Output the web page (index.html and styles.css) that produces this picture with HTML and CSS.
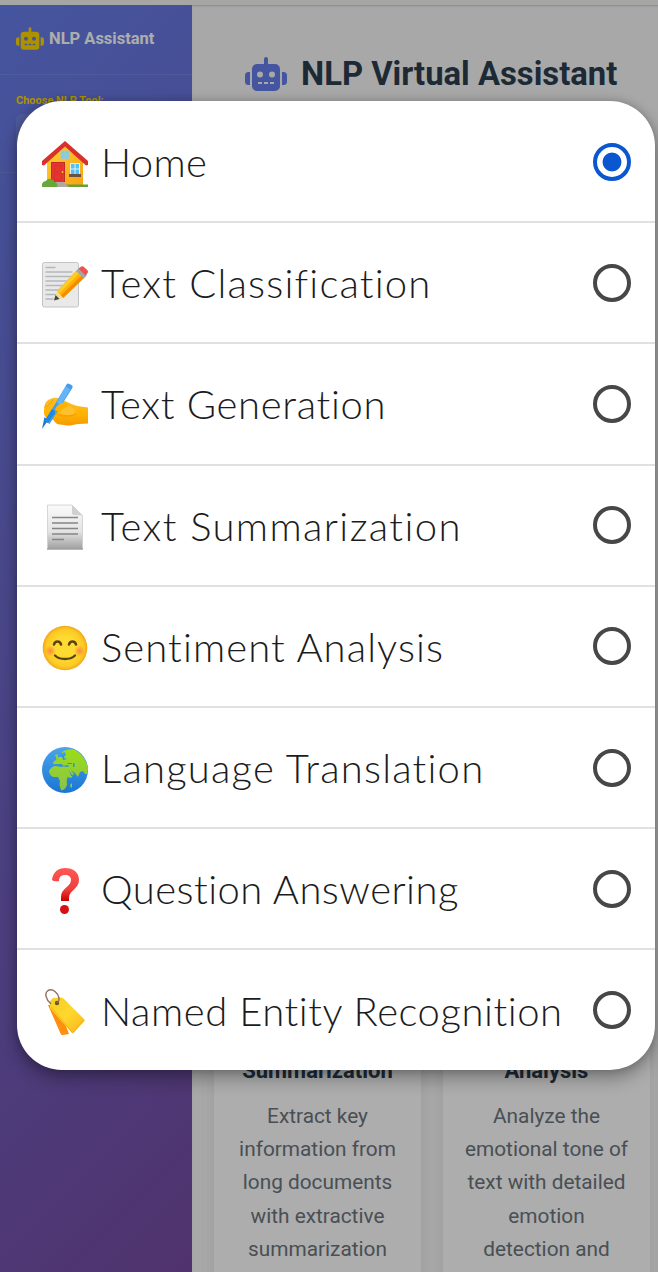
FILE: index.html
```html
<!DOCTYPE html>
<html lang="en">
<head>
<meta charset="utf-8">
<title>NLP Virtual Assistant</title>
<link rel="stylesheet" href="styles.css">
</head>
<body>
<svg width="0" height="0" class="defs" aria-hidden="true">
  <defs>
    <symbol id="robot" viewBox="0 0 42 34">
      <path fill="currentColor" fill-rule="evenodd" d="M19 7V2a2 2 0 0 1 4 0v5h7a5 5 0 0 1 5 5v17a5 5 0 0 1-5 5H12a5 5 0 0 1-5-5V12a5 5 0 0 1 5-5zM15 14.500a3 3 0 1 0 0 6 3 3 0 0 0 0-6zM27 14.500a3 3 0 1 0 0 6 3 3 0 0 0 0-6zM13 25v2h4v-2zM19 25v2h4v-2zM25 25v2h4v-2zM5 15H3.500A3.500 3.500 0 0 0 0 18.500v6A3.500 3.500 0 0 0 3.500 28H5zM37 15h1.500a3.500 3.500 0 0 1 3.500 3.500v6a3.500 3.500 0 0 1-3.500 3.500H37z"/>
    </symbol>
    <linearGradient id="wall" x1="0" y1="0" x2="1" y2="1"><stop offset="0" stop-color="#ffd02f"/><stop offset="1" stop-color="#f8a313"/></linearGradient>
    <linearGradient id="paper" x1="0" y1="0" x2="0" y2="1"><stop offset="0" stop-color="#fafafa"/><stop offset=".6" stop-color="#e4e4e4"/><stop offset="1" stop-color="#a0a0a0"/></linearGradient>
    <radialGradient id="face"><stop offset=".5" stop-color="#fddb30"/><stop offset=".85" stop-color="#fcc923"/><stop offset="1" stop-color="#f2a51c"/></radialGradient>
    <radialGradient id="blush"><stop offset="0" stop-color="#ff6b50" stop-opacity=".75"/><stop offset="1" stop-color="#ff7043" stop-opacity="0"/></radialGradient>
    <linearGradient id="sea" x1="0" y1="0" x2="0" y2="1"><stop offset="0" stop-color="#4ba3ec"/><stop offset="1" stop-color="#1976d2"/></linearGradient>
    <linearGradient id="land" x1="0" y1="0" x2="0" y2="1"><stop offset="0" stop-color="#9add16"/><stop offset="1" stop-color="#8bc34a"/></linearGradient>
    <linearGradient id="mark" x1="0" y1="0" x2="0" y2="1"><stop offset="0" stop-color="#ff5a55"/><stop offset=".65" stop-color="#f03e3c"/><stop offset="1" stop-color="#c80000"/></linearGradient>
    <linearGradient id="tag" x1="0" y1="0" x2="1" y2="1"><stop offset="0" stop-color="#f6cf20"/><stop offset=".5" stop-color="#ffd72e"/><stop offset="1" stop-color="#f6b51a"/></linearGradient>
    <linearGradient id="hand" x1="0" y1="0" x2="0" y2="1"><stop offset="0" stop-color="#fbc02d"/><stop offset=".6" stop-color="#ffb300"/><stop offset="1" stop-color="#f59a00"/></linearGradient>
  </defs>
</svg>

<div class="page">
  <aside class="sidebar">
    <div class="brand"><svg class="brand-icon"><use href="#robot"/></svg><span>NLP Assistant</span></div>
    <div class="tool-picker">
      <div class="picker-label">Choose NLP Tool:</div>
      <div class="picker-box"></div>
    </div>
  </aside>
  <main class="content">
    <h1 class="title"><svg class="title-icon"><use href="#robot"/></svg><span>NLP Virtual Assistant</span></h1>
    <div class="cards">
      <section class="card">
        <h3>Summarization</h3>
        <p>Extract key<br>information from<br>long documents<br>with extractive<br>summarization</p>
      </section>
      <section class="card">
        <h3>Analysis</h3>
        <p>Analyze the<br>emotional tone of<br>text with detailed<br>emotion<br>detection and</p>
      </section>
    </div>
  </main>
</div>

<div class="scrim"></div>

<div class="dialog" role="radiogroup">
  <div class="option home">
    <svg class="emoji" viewBox="0 0 46 46">
      <path fill="url(#wall)" d="M5 19 23 3l18 16v25H5z"/>
      <path fill="#d9302c" d="M23 0 0 20v4l2 .5L23 5.500 44 24.500l2-.5v-4z"/>
      <path fill="#b4c3b4" d="M18.500 9.500h9V18h-9z"/>
      <path fill="#6ad5f5" d="M19.500 10.500h3v3h-3zM23.500 10.500h3v3h-3zM19.500 14.300h3v3h-3zM23.500 14.300h3v3h-3z"/>
      <path fill="#c62828" d="M9 21h14v20H9z"/><path fill="#e53530" d="M10 22h12v19H10z"/>
      <path fill="none" stroke="#d32f2b" stroke-width=".7" d="M12.500 24.500h7v6h-7zM12.500 33h7v6h-7z"/>
      <circle cx="20.500" cy="31" r=".9" fill="#ffca28"/>
      <path fill="#e8f0e8" d="M28 22h10v12H28z"/>
      <path fill="#4fc3f7" d="M29 23h3.500v4.500H29zM33.500 23H37v4.500h-3.500zM29 28.500h3.500V33H29zM33.500 28.500H37V33h-3.500z"/>
      <path fill="#6d5147" d="M27 33h12v3H27z"/>
      <path fill="#689f38" d="M24 43.500h22V46H24z"/>
      <path fill="#b0a8a4" d="M12 41h10l5 5H10z"/>
      <path fill="#68a83a" d="M0 46c-1-4 2-6 4-6 2-4 8-2 8 1 3 0 4 3 3 5z"/>
    </svg>
    <span class="label">Home</span><span class="radio checked"></span>
  </div>
  <div class="option classification">
    <svg class="emoji" viewBox="0 0 46 46">
      <rect x=".5" y=".5" width="36" height="44.500" rx="2" fill="#e9e9e9" stroke="#c2c4c6"/>
      <path stroke="#b4b8bb" stroke-width="1.300" d="M3.500 5.500h10M3.500 10h27M3.500 14.500h27M3.500 19h27M3.500 23.500h27M3.500 28h24M3.500 32.500h20M3.500 37h8"/>
      <path fill="#ffb300" d="m34 9 8 7-21 20-6-7z"/>
      <path fill="#ffca28" d="m34 9 3 2.500L18 31l-3-2z"/>
      <path fill="#f28c00" d="m39.500 13.500 2.500 2.500-21 20-2-2.500z"/>
      <path fill="#a1a5a8" d="m34 9 3-3 8 7-3 3.500z"/>
      <path fill="#ef5350" d="m36.500 6.500 2-1.500q2-1.500 4 .5l2.500 2.300q2 2 0 4l-1.500 1.700z"/>
      <path fill="#f5dc96" d="m15 29 6 7-9 2.500z"/>
      <path fill="#424242" d="m13.500 33 4 4-5.500 1.500z"/>
    </svg>
    <span class="label">Text Classification</span><span class="radio"></span>
  </div>
  <div class="option generation">
    <svg class="emoji" viewBox="0 0 46 46">
      <path fill="url(#hand)" d="M3 21c1-3 4-5 8-6 5-1 9 1 12 3 5 2 8 4 12 5l11 1.500v16l-9 .5c-4 0-7 2-11 1.500l-8-1c-3 0-5-2-7-5-5 1-9-3-9-6.500 0-3 0-6 1-9z"/>
      <path fill="#fdc130" d="M18 23c6-2 12 1 15 4l-1 4c-6 2-11 1-16-2z"/>
      <path fill="#439de8" d="M24 2.500q1-3 3.500-1.500l2 1q2 1 .5 3.500L7.500 41 3 38z"/>
      <path fill="#64b5f6" d="m23.500 3.500 5 3-10 16-4-3z"/>
      <path fill="#1976d2" d="M2.500 34 6 37.500 0 46z"/>
      <path fill="#1e88e5" d="m10 26 3.500 3-7.500 11-3.500-2z"/>
      <path fill="#ffb300" d="M13 27c1-5 7-8 11-7 3 1 2 4-1 5-2 1-4 2-5 5z"/>
      <path fill="none" stroke="#f39a00" stroke-linecap="round" d="M3 24c4-1 6-4 8-7M13 29c3 3 6 4 10 4s8 0 11-2"/>
    </svg>
    <span class="label">Text Generation</span><span class="radio"></span>
  </div>
  <div class="option summary">
    <svg class="emoji" viewBox="0 0 46 46">
      <path fill="url(#paper)" stroke="#cdcdcd" stroke-width=".8" d="M5.500 1H30l10.500 10.500V45h-35z"/>
      <path fill="#d0d0d0" d="M30 1v8q0 2 2 2l8.500.500z"/>
      <path stroke="#858585" stroke-width="1.600" d="M10 13.500h26M10 19h26M10 24.500h26M10 30h26M10 35.500h12"/>
      <path stroke="#888" d="M5 45h36"/>
    </svg>
    <span class="label">Text Summarization</span><span class="radio"></span>
  </div>
  <div class="option sentiment">
    <svg class="emoji" viewBox="0 0 46 46">
      <circle cx="23" cy="23" r="22.300" fill="url(#face)"/>
      <circle cx="8.500" cy="26" r="5.500" fill="url(#blush)"/><circle cx="37.500" cy="26" r="5.500" fill="url(#blush)"/>
      <path fill="none" stroke="#5d4215" stroke-width="2.600" stroke-linecap="round" d="M12 19.500c1-4 6-4 7 0M27 19.500c1-4 6-4 7 0"/>
      <path fill="none" stroke="#5d4215" stroke-width="2.400" stroke-linecap="round" d="M13 30.500c5 4.700 15 4.700 20 0"/>
    </svg>
    <span class="label">Sentiment Analysis</span><span class="radio"></span>
  </div>
  <div class="option translation">
    <svg class="emoji" viewBox="0 0 46 46">
      <circle cx="23" cy="23" r="23" fill="url(#sea)"/>
      <path fill="url(#land)" d="M20 5q6-4 13-2c7 4 12 11 13 19l-1 5-2 0-2-3-3 1-2 5-3-4-4-3 3 4-3 4-3-1c-2 3-1 5-1 8-2 5-5 6-6 5-1-3-2-5-1-9l-2-4-4 0c-3 0-5-4-5-6 1-3 4-5 7-5l5 1 3-1-4-2-3 0-4 0 1-3 3-1 2-3 4 0 3-2-1-3-3 1z"/>
      <path fill="#90cd38" d="m13 8 3-1 0 3 1 2-3 1 0-3zM28 38l2-2 0 4-1 1z"/>
      <path fill="#3490e0" d="m20 9 3-2-1 4 3 1-4 1zM17 17l3 0 1 2 4-1 2 1-1 1-8-1zM25 16l5 0 0 1-4 0zM31 16h1.500v4H31zM27 23l3 5 3-1-1 2-3 0z"/>
    </svg>
    <span class="label">Language Translation</span><span class="radio"></span>
  </div>
  <div class="option question">
    <svg class="emoji" viewBox="0 0 46 46">
      <path fill="url(#mark)" d="M10 12C11 4 16 0 23 0c8 0 14 4 14 12 0 9-10 10-10 18v3h-8v-4c0-9 10-10 10-17 0-3-2-5-6-5s-6 2-6 6q-5 1-7-1z"/>
      <circle cx="22.500" cy="41.500" r="4.500" fill="#d50f12"/>
    </svg>
    <span class="label">Question Answering</span><span class="radio"></span>
  </div>
  <div class="option entity">
    <svg class="emoji" viewBox="0 0 46 46">
      <path fill="#ff8f0f" d="m6 16 10 0 11 29-6 1q-1.500.5-2.500-1.500z"/>
      <path fill="url(#tag)" d="m8 12 3-3 8-.5q2 0 3 1.500l20 20q1 1.500 0 2.500L31.500 44q-1.500 1-2.500-1L8 19z"/>
      <path fill="none" stroke="#edac16" stroke-width=".8" d="m9 18 21 25M42 31 31 43.500"/>
      <circle cx="15" cy="14" r="2.200" fill="#6d5520"/>
      <path fill="none" stroke="#8d6e63" stroke-width="1.400" d="M9 15C4 11 2 4 6 1.500 11-1 16 4 17 9q.5 3-2 5"/>
    </svg>
    <span class="label">Named Entity Recognition</span><span class="radio"></span>
  </div>
</div>
</body>
</html>
```
FILE: styles.css
```css
* { box-sizing: border-box; }
body { margin: 0; font-family: Roboto, "Liberation Sans", sans-serif; }
.defs { position: absolute; }

.page {
  display: flex;
  width: 658px;
  height: 1272px;
  overflow: hidden;
  border-top: 5px solid #f5f5f3;
  background: #f8f8f8;
}
.sidebar {
  flex: none;
  width: 192px;
  background: linear-gradient(135deg, #667eea 0%, #764ba2 100%);
}
.brand {
  display: flex;
  align-items: center;
  gap: 5px;
  height: 70px;
  padding: 0 0 3px 16px;
  border-bottom: 1px solid rgba(255, 255, 255, .1);
  color: #fff;
  font-size: 16.500px;
  font-weight: 700;
  white-space: nowrap;
}
.brand-icon { width: 28px; height: 23px; color: #ffd700; }
.tool-picker {
  height: 98px;
  padding: 19px 16px 0;
  border-bottom: 1px solid rgba(255, 255, 255, .1);
}
.picker-label { color: #ffd700; font-size: 11px; line-height: 13px; font-weight: 700; }
.picker-box { height: 40px; margin-top: 7px; border-radius: 6px; background: rgba(255, 255, 255, .1); }

.content { flex: 1; padding: 0 8px 0 22px; box-shadow: inset 0 2px 2px -1px #c8c8dc; }
.title {
  display: flex;
  align-items: center;
  gap: 14px;
  height: 137px;
  margin: 0;
  padding-left: 31px;
  color: #2c3e50;
  font-size: 32.800px;
  font-weight: 700;
  white-space: nowrap;
}
.title-icon { width: 42px; height: 34px; color: #667eea; }
.cards {
  display: grid;
  grid-template-columns: 1fr 1fr;
  gap: 22px;
  margin-top: 863px;
}
.card {
  height: 300px;
  padding-top: 51px;
  background: #fff;
  box-shadow: 0 4px 15px rgba(0, 0, 0, .08);
  text-align: center;
  color: #6c757d;
}
.card h3 { margin: 0; color: #2c3e50; font-size: 22px; line-height: 30px; font-weight: 700; }
.card p { margin: 14px 0 0; font-size: 20.800px; line-height: 33.200px; white-space: nowrap; }

.scrim { position: absolute; inset: 0; width: 658px; height: 1272px; background: rgba(0, 0, 0, .32); }

.dialog {
  position: absolute;
  left: 17px;
  top: 101px;
  width: 638px;
  height: 969px;
  display: grid;
  grid-template-rows: repeat(7, 121.200px) 1fr;
  padding-top: 1px;
  overflow: hidden;
  border-radius: 45px;
  background: #fff;
  box-shadow: 0 8px 18px rgba(0, 0, 0, .32), 0 0 8px rgba(0, 0, 0, .18);
}
.option {
  display: flex;
  align-items: center;
  padding: 0 24px 0 25px;
  border-bottom: 2px solid #e0e0e0;
}
.option:last-child { border-bottom: 0; }
.emoji { flex: none; width: 46px; height: 46px; margin-top: 4px; }
.label {
  flex: 1;
  margin: 1px 0 0 13px;
  color: #1b1b20;
  font-family: Lato, "Open Sans", sans-serif;
  font-size: 40px;
  font-weight: 300;
  line-height: 50px;
  white-space: nowrap;
}
.home .label { letter-spacing: .3px; }
.classification .label { letter-spacing: 1.200px; }
.generation .label { letter-spacing: .7px; }
.summary .label { letter-spacing: 1.400px; }
.sentiment .label { letter-spacing: 1.100px; }
.translation .label { letter-spacing: 1.200px; }
.question .label { letter-spacing: .47px; }
.entity .label { letter-spacing: .56px; }
.radio {
  flex: none;
  width: 38px;
  height: 38px;
  border: 4px solid #474747;
  border-radius: 50%;
}
.radio.checked {
  border-color: #0b57d0;
  background: radial-gradient(circle, #0b57d0 9px, transparent 9.800px);
}
```
